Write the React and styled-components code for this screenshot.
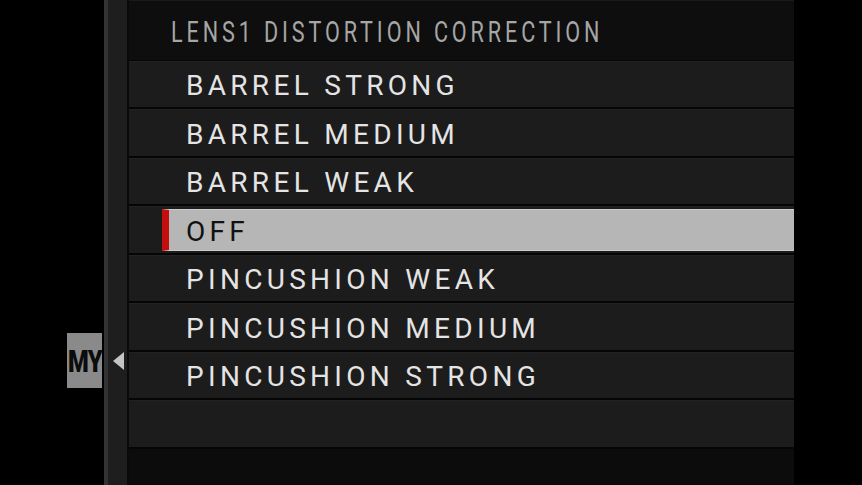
import React from "react";
import styled, { createGlobalStyle } from "styled-components";

const Global = createGlobalStyle`
  html, body { margin: 0; padding: 0; background: #000; }
  body { width: 862px; height: 485px; overflow: hidden; font-family: Roboto, "Liberation Sans", sans-serif; }
`;

const Screen = styled.div`
  display: flex;
  width: 862px;
  height: 485px;
  background: #000;
`;

const LeftZone = styled.div`
  width: 104px;
  display: flex;
  flex-direction: column;
  align-items: flex-end;
  padding-top: 333px;
  box-sizing: border-box;
`;

const Badge = styled.div`
  width: 35px;
  height: 55px;
  margin-right: 2px;
  background: #8a8a8a;
  display: flex;
  align-items: center;
  justify-content: center;
  overflow: visible;
`;

const BadgeText = styled.span`
  display: inline-block;
  font-family: Roboto, "Liberation Sans", sans-serif;
  font-weight: 900;
  font-size: 32px;
  line-height: 1;
  color: #0c0c0c;
  transform: scaleX(0.74);
  letter-spacing: -1px;
`;

const SideBar = styled.div`
  width: 19px;
  border-left: 4px solid #333333;
  border-right: 2px solid #0a0a0a;
  background: #1e1e1e;
  display: flex;
  flex-direction: column;
  align-items: center;
  padding-top: 352px;
`;

const Arrow = styled.div`
  width: 0;
  height: 0;
  border-top: 9px solid transparent;
  border-bottom: 9px solid transparent;
  border-right: 11px solid #c4c4c4;
  margin-left: 1px;
`;

const Panel = styled.div`
  width: 665px;
  display: flex;
  flex-direction: column;
  background: #050505;
`;

const Header = styled.div`
  height: 60px;
  background: #0e0e0e;
  border-top: 1px solid #1a1a1a;
  box-sizing: border-box;
  display: flex;
  align-items: center;
  padding-left: 42px;
`;

const HeaderText = styled.span`
  display: inline-block;
  font-size: 30px;
  color: #a6a6a6;
  letter-spacing: 5.4px;
  transform: scaleX(0.72);
  transform-origin: left center;
  white-space: nowrap;
  margin-top: 2px;
`;

const List = styled.div`
  display: grid;
  grid-auto-rows: 46.5px;
  row-gap: 2px;
  padding-top: 0.5px;
`;

const Row = styled.div`
  position: relative;
  background: #1c1c1c;
  border-top: 1px solid #222;
  box-sizing: border-box;
  display: flex;
  align-items: center;
  padding-left: ${(p) => (p.$selected ? "0" : "57px")};
`;

const Highlight = styled.div`
  margin-left: 33px;
  flex: 1;
  height: 42px;
  display: flex;
  align-items: center;
  background: #b6b6b6;
  border-top: 1px solid #cbcbcb;
  border-bottom: 1px solid #cbcbcb;
  border-left: 7px solid #c40e0e;
  box-sizing: border-box;
  padding-left: 17px;
`;

const Label = styled.span`
  font-size: 28px;
  letter-spacing: 4.3px;
  color: ${(p) => (p.$selected ? "#111" : "#e4e4e4")};
  white-space: nowrap;
  line-height: 1;
  margin-top: 4px;
`;

const Footer = styled.div`
  flex: 1;
  margin-top: 2px;
  background: #0c0c0c;
`;

const items = [
  "BARREL STRONG",
  "BARREL MEDIUM",
  "BARREL WEAK",
  "OFF",
  "PINCUSHION WEAK",
  "PINCUSHION MEDIUM",
  "PINCUSHION STRONG",
  "",
];

export default function App() {
  return (
    <>
      <Global />
      <Screen>
        <LeftZone>
          <Badge>
            <BadgeText>MY</BadgeText>
          </Badge>
        </LeftZone>
        <SideBar>
          <Arrow />
        </SideBar>
        <Panel>
          <Header>
            <HeaderText>LENS1 DISTORTION CORRECTION</HeaderText>
          </Header>
          <List>
            {items.map((it, i) =>
              it === "OFF" ? (
                <Row key={i} $selected>
                  <Highlight>
                    <Label $selected>{it}</Label>
                  </Highlight>
                </Row>
              ) : (
                <Row key={i}>
                  <Label>{it}</Label>
                </Row>
              )
            )}
          </List>
          <Footer />
        </Panel>
      </Screen>
    </>
  );
}
